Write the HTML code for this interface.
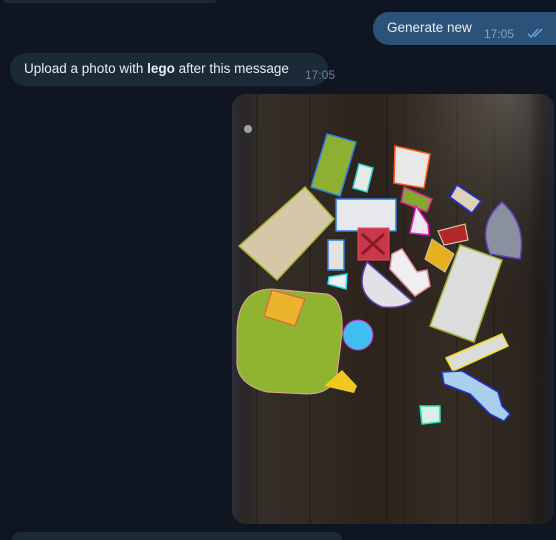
<!DOCTYPE html>
<html><head><meta charset="utf-8"><style>
html,body{margin:0;padding:0;background:#0f1621;width:556px;height:540px;overflow:hidden;font-family:"Liberation Sans",sans-serif}
#r{position:relative;width:556px;height:540px;overflow:hidden}
.b{position:absolute;border-radius:16px}
.in{background:#1c2a38}
.out{background:#2b5278}
.t{position:absolute;color:#e9eef3;font-size:13.5px;white-space:nowrap}
.tm{position:absolute;font-size:12px;white-space:nowrap}
</style></head><body><div id="r">
<div class="b in" style="left:4px;top:0;width:212px;height:3px;border-radius:0 0 16px 16px"></div>

<div class="b out" style="left:373px;top:12px;width:183px;height:33px;border-radius:16px 0 0 16px"></div>
<div class="t" style="left:387px;top:20px">Generate new</div>
<div class="tm" style="left:484px;top:27px;color:#7ea6c9">17:05</div>
<svg style="position:absolute;left:527px;top:27px" width="20" height="12" viewBox="0 0 20 12"><path d="M1 7l3 3 7-8M7 10l8-8" stroke="#5fb0ef" stroke-width="1.4" fill="none"/></svg>

<div class="b in" style="left:10px;top:53px;width:318px;height:33px"></div>
<div class="t" style="left:24px;top:61px">Upload a photo with <b>lego</b> after this message</div>
<div class="tm" style="left:305px;top:68px;color:#6d8196">17:05</div>

<div style="position:absolute;left:232px;top:94px;width:322px;height:430px;border-radius:14px;overflow:hidden">
<svg width="322" height="430" viewBox="0 0 322 430">
<defs>
<linearGradient id="w" x1="0" x2="1" y1="0" y2="0">
<stop offset="0" stop-color="#35302c"/><stop offset=".25" stop-color="#322a24"/><stop offset=".45" stop-color="#2c231b"/><stop offset=".7" stop-color="#352c25"/><stop offset="1" stop-color="#28211d"/></linearGradient>
<radialGradient id="l" cx=".85" cy="0" r=".6"><stop offset="0" stop-color="#8a8580" stop-opacity=".45"/><stop offset="1" stop-color="#000" stop-opacity="0"/></radialGradient>
<linearGradient id="s" x1="0" x2="1"><stop offset="0" stop-color="#2a3040" stop-opacity=".7"/><stop offset=".08" stop-color="#000" stop-opacity="0"/><stop offset=".92" stop-color="#000" stop-opacity="0"/><stop offset="1" stop-color="#1c2230" stop-opacity=".7"/></linearGradient>
</defs>
<rect width="322" height="430" fill="url(#w)"/>
<g stroke="#1c1511" stroke-width="1" opacity=".7">
<path d="M25 0V430M78 0V430M155 0V430M172 0V430M225 0V430M262 0V430"/></g>
<rect width="322" height="430" fill="url(#l)"/>
<rect width="322" height="430" fill="url(#s)"/>
<circle cx="16" cy="35" r="4" fill="#9aa3a0"/>
<polygon points="7,152 73,93 102,125 45,186" fill="#d6c7a8" stroke="#a9b12c" stroke-width="1.5"/>
<polygon points="95,40 124,48 108,102 79,93" fill="#8fb133" stroke="#2f7fe0" stroke-width="1.5"/>
<polygon points="127,70 141,74 135,98 121,94" fill="#e8e8e6" stroke="#2fd8d8" stroke-width="1.5"/>
<rect x="104" y="105" width="60" height="32" fill="#e6e8ec" stroke="#2f7fe0" stroke-width="1.5"/>
<polygon points="163,52 198,60 192,94 162,89" fill="#e8e8e8" stroke="#ff5a1a" stroke-width="1.5"/>
<polygon points="172,93 200,105 195,118 169,108" fill="#84a830" stroke="#e0208c" stroke-width="1.5"/>
<polygon points="184,112 196,130 197,141 178,139" fill="#ece8ee" stroke="#e020c8" stroke-width="1.5"/>
<polygon points="225,91 249,107 240,119 218,103" fill="#ddd2b8" stroke="#2030e0" stroke-width="1.5"/>
<path d="M270 108 Q295 130 288 165 L258 160 Q245 130 270 108Z" fill="#8a919e" stroke="#6040c0" stroke-width="1.5"/>
<polygon points="206,137 233,130 236,146 212,151" fill="#b02828" stroke="#e8d8b0" stroke-width="1"/>
<polygon points="200,145 222,160 213,178 193,165" fill="#e6b020" stroke="#d8c0a0" stroke-width="1"/>
<polygon points="228,151 270,166 242,248 198,232" fill="#dcdcdc" stroke="#a0b030" stroke-width="1.5"/>
<rect x="126" y="134" width="31" height="32" fill="#c8384a" stroke="#e05060" stroke-width="1"/>
<path d="M130 140l22 20M152 140l-22 20" stroke="#8a1a28" stroke-width="3"/>
<rect x="96" y="146" width="16" height="30" fill="#e4e2de" stroke="#2f7fe0" stroke-width="1.5"/>
<polygon points="97,183 115,180 114,195 96,190" fill="#eef0f4" stroke="#2fd8e8" stroke-width="1.5"/>
<path d="M135 168 Q120 200 150 213 Q170 215 180 207 Z" fill="#e2e2e6" stroke="#6040b0" stroke-width="1.5"/>
<polygon points="160,160 170,155 185,178 195,176 198,192 183,202 158,175" fill="#efeff1" stroke="#e890a8" stroke-width="1.5"/>
<path d="M5 240 Q5 195 40 195 L95 200 Q112 205 110 240 L105 280 Q100 300 75 300 L35 298 Q3 290 5 265Z" fill="#8fb530" stroke="#e8a0a0" stroke-width="1"/>
<polygon points="40,196 73,205 63,232 32,222" fill="#eab42c" stroke="#d87040" stroke-width="1.5"/>
<circle cx="126" cy="241" r="15" fill="#40c0f0" stroke="#d020c0" stroke-width="1"/>
<polygon points="92,292 110,276 125,292 122,299" fill="#f0c820"/>
<polygon points="214,264 270,240 276,252 221,277" fill="#dcdcdc" stroke="#f0e020" stroke-width="1.5"/>
<polygon points="210,278 230,277 266,298 270,312 278,320 272,327 258,320 238,300 212,290" fill="#a8d0ec" stroke="#2030e0" stroke-width="1.5"/>
<polygon points="188,312 208,312 208,328 190,330" fill="#dceee8" stroke="#20e0b0" stroke-width="1.5"/>
</svg></div>

<div class="b in" style="left:12px;top:532px;width:330px;height:8px;border-radius:8px 8px 0 0"></div>
</div></body></html>
